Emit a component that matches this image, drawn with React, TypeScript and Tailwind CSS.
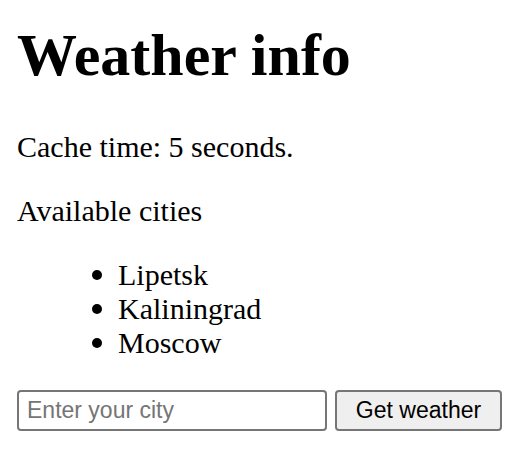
import React from "react";

const cities = ["Lipetsk", "Kaliningrad", "Moscow"];

export default function App() {
  return (
    <div className="min-h-screen bg-white pl-[17px] pt-[21px] text-black font-['Liberation_Serif',serif]">
      <h1 className="text-[60px] font-bold leading-[68px]">Weather info</h1>
      <p className="mt-[41px] text-[30px] leading-[34px]">Cache time: 5 seconds.</p>
      <p className="mt-[30px] text-[30px] leading-[34px]">Available cities</p>
      <ul className="mt-[30px] pl-[75px] text-[30px] leading-[34px]">
        {cities.map((c) => (
          <li key={c} className="flex items-center gap-[16px]">
            <span className="block h-[10px] w-[10px] rounded-full bg-black" />
            <span>{c}</span>
          </li>
        ))}
      </ul>
      <div className="mt-[30px] flex gap-[8px]">
        <input
          type="text"
          placeholder="Enter your city"
          className="h-[41px] w-[310px] rounded-[4px] border-2 border-[#767676] bg-white pl-[8px] text-[23px] text-black placeholder:text-[#757575] outline-none font-['Liberation_Sans',Arial,sans-serif]"
        />
        <button
          type="button"
          className="h-[41px] w-[167px] rounded-[4px] border-2 border-[#767676] bg-[#efefef] text-[23px] text-black font-['Liberation_Sans',Arial,sans-serif]"
        >
          Get weather
        </button>
      </div>
    </div>
  );
}
